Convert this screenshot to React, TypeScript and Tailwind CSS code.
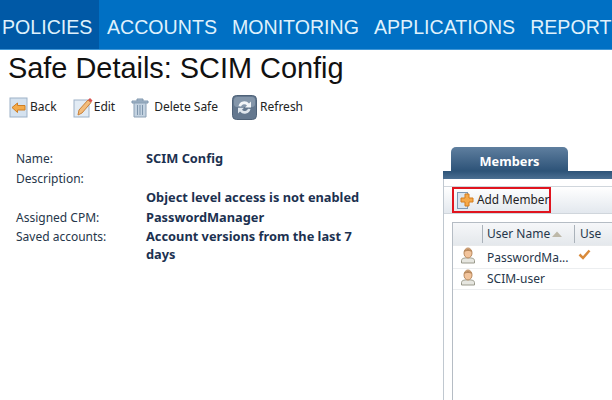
import React from "react"

const tahoma = "font-['Noto_Sans','DejaVu_Sans',sans-serif]"

const navItems = ["ACCOUNTS", "MONITORING", "APPLICATIONS", "REPORTS"]

const BackIcon = () => (
  <svg width="21" height="21" viewBox="0 0 21 21">
    <rect x="1" y="1" width="17" height="19" fill="#d5e2ef" stroke="#9db2c8" />
    <path d="M3 10.500 L8.500 6 V8.500 H16 V13 H8.500 V15.500 Z" fill="#f4ab4a" stroke="#cf7f24" />
  </svg>
)

const EditIcon = () => (
  <svg width="21" height="21" viewBox="0 0 21 21">
    <rect x="1" y="3" width="15" height="17" fill="#e2ebf4" stroke="#9db2c8" />
    <path d="M5 18 L6 13 L15 3 L18 5.500 L9 16 Z" fill="#f3bd7c" stroke="#c9813a" />
    <path d="M15 3 L17 1 L19.500 3.500 L18 5.500 Z" fill="#d9534f" />
  </svg>
)

const TrashIcon = () => (
  <svg width="18" height="21" viewBox="0 0 18 21">
    <path d="M1 4 H17 V6 H1 Z M6 4 V2 H12 V4" fill="#aebfd0" stroke="#7f96ad" />
    <path d="M3 6 H15 V20 H3 Z" fill="#c3d2e0" stroke="#8ba0b5" />
    <path d="M6.500 8 V18 M9 8 V18 M11.500 8 V18" stroke="#7f96ad" />
  </svg>
)

const RefreshIcon = () => (
  <svg width="25" height="25" viewBox="0 0 25 25">
    <rect x="0.500" y="0.500" width="24" height="24" rx="4" fill="#64788f" stroke="#4f6278" />
    <rect x="2" y="2" width="21" height="10" rx="3" fill="#8496aa" />
    <path d="M6.500 11 A6 6 0 0 1 17 8.500 L19 6.500 V12.500 H13 L15 10.500 A3.500 3.500 0 0 0 9 11.500 Z" fill="#f2f5f8" />
    <path d="M18.500 14 A6 6 0 0 1 8 16.500 L6 18.500 V12.800 H12 L10 14.800 A3.500 3.500 0 0 0 16 13.800 Z" fill="#dfe6ed" />
  </svg>
)

const UserIcon = () => (
  <svg width="16" height="17" viewBox="0 0 16 17">
    <path d="M1.500 16 V13.500 C1.500 11.500 4 10.800 8 10.800 C12 10.800 14.500 11.500 14.500 13.500 V16 Z" fill="#e6e6e0" stroke="#9a9a8c" />
    <ellipse cx="8" cy="6" rx="4" ry="5" fill="#f2c49c" stroke="#b98a5e" />
    <path d="M4 5 C4 1 12 1 12 5 C10 3.500 6 3.500 4 5 Z" fill="#b98a5e" />
  </svg>
)

const ToolButton = ({ icon, label, className = "" }: { icon: React.ReactNode; label: string; className?: string }) => (
  <div className={`flex items-center ${className}`}>
    {icon}
    <span className="text-[12px] text-[#222] leading-none">{label}</span>
  </div>
)

const rows = [
  { label: "Name:", value: "SCIM Config" },
  { label: "Description:", value: "" },
  { label: "", value: "Object level access is not enabled" },
  { label: "Assigned CPM:", value: "PasswordManager" },
  { label: "Saved accounts:", value: "Account versions from the last 7 days" },
]

const App = () => {
  return (
    <div className={`w-[612px] h-[400px] overflow-hidden bg-white ${tahoma}`}>
      <div className="h-[50px] flex bg-[#0070c4] border-b border-[#3f96d6] font-['Liberation_Sans',sans-serif] text-[19.600px] text-[#dff1fc]">
        <div className="w-[99px] shrink-0 bg-[#0059a6] pl-[2px] pt-[16px] leading-[23px]">POLICIES</div>
        {navItems.map((item) => (
          <div key={item} className="shrink-0 pl-[8px] pr-[7px] pt-[16px] leading-[23px] whitespace-nowrap">
            {item}
          </div>
        ))}
      </div>

      <h1 className="ml-[8px] mt-[3px] font-['Liberation_Sans',sans-serif] text-[28.900px] leading-[31px] text-[#111]">
        Safe Details: SCIM Config
      </h1>

      <div className="flex items-center h-[26px] mt-[10px] ml-[9px]">
        <ToolButton icon={<BackIcon />} label="Back" />
        <ToolButton icon={<EditIcon />} label="Edit" className="ml-[16px]" />
        <ToolButton icon={<TrashIcon />} label="Delete Safe" className="ml-[16px] gap-[5px]" />
        <ToolButton icon={<RefreshIcon />} label="Refresh" className="ml-[14px] gap-[3px]" />
      </div>

      <div className="flex mt-[15px]">
        <div className="w-[443px] shrink-0 pl-[16px] pt-[14px]">
          <div className="grid grid-cols-[130px_226px] text-[12px] leading-[19.500px]">
            {rows.map((row, i) => (
              <React.Fragment key={i}>
                <div className="text-[#26364a]">{row.label}</div>
                <div className={`font-bold text-[12.800px] text-[#1c3150] ${i === 4 ? "leading-[18px]" : ""}`}>{row.value}</div>
              </React.Fragment>
            ))}
          </div>
        </div>

        <div className="w-[169px] shrink-0 overflow-hidden pt-[12px]">
          <div className="ml-[8px] w-[117px] h-[24px] pt-[6px] rounded-t-[5px] bg-gradient-to-b from-[#5f7f9f] to-[#2d5378] text-white text-[12.800px] font-bold flex items-center justify-center">
            Members
          </div>
          <div className="h-[8px] bg-gradient-to-b from-[#2d5378] to-[#4b6f92]" />
          <div className="h-[300px] border-l border-[#c0c8d0] bg-white pt-[7px]">
            <div className="h-[28px] border-y border-[#d0d6dc] bg-gradient-to-b from-[#ffffff] to-[#e3e8ee] flex items-center">
              <div className="ml-[8px] h-[26px] w-[99px] border-2 border-[#e0141e] flex items-center pl-[3px]">
                <svg width="20" height="17" viewBox="0 0 20 17" className="shrink-0">
                  <rect x="0.500" y="0.500" width="10" height="16" fill="#dbe6f0" stroke="#7f9ab5" />
                  <path d="M8 2 H12 V6 H16 V10 H12 V14 H8 V10 H4 V6 H8 Z" fill="#f5a94a" stroke="#d47c1c" />
                </svg>
                <span className="text-[11.800px] text-[#222] whitespace-nowrap">Add Member</span>
              </div>
            </div>
            <div className="mt-[8px] ml-[8px] h-[260px] border-l border-t border-[#b5bcc4]">
              <div className="h-[23px] flex items-center bg-gradient-to-b from-[#f6f7f9] to-[#e4e8ec] text-[12px] text-[#26364a] border-b border-[#e8eaec]">
                <div className="w-[30px] h-[18px] border-r border-[#aab2ba]" />
                <div className="w-[92px] h-[18px] flex items-center pl-[4px] border-r border-[#aab2ba] whitespace-nowrap">
                  User Name
                  <svg width="12" height="6" viewBox="0 0 12 6" className="ml-[1px]">
                    <path d="M1 6 L6 0.500 L11 6 Z" fill="#bdb8a8" />
                  </svg>
                </div>
                <div className="pl-[5px]">Use</div>
              </div>
              <div className="h-[23px] flex items-center border-b border-[#eceef0] text-[12px] text-[#26364a] pt-[1px]">
                <div className="w-[30px] flex justify-center mb-[5px]"><UserIcon /></div>
                <div className="w-[92px] pl-[4px] whitespace-nowrap">PasswordMa...</div>
                <svg width="13" height="11" viewBox="0 0 13 11" className="ml-[3px] mb-[7px]">
                  <path d="M1.500 5.500 L5 9 L11.500 1.500" fill="none" stroke="#d98a3a" strokeWidth="2.500" />
                </svg>
              </div>
              <div className="h-[21px] flex items-center border-b border-[#eceef0] text-[12px] text-[#26364a]">
                <div className="w-[30px] flex justify-center mb-[3px]"><UserIcon /></div>
                <div className="pl-[4px] whitespace-nowrap">SCIM-user</div>
              </div>
            </div>
          </div>
        </div>
      </div>
    </div>
  )
}

export default App
